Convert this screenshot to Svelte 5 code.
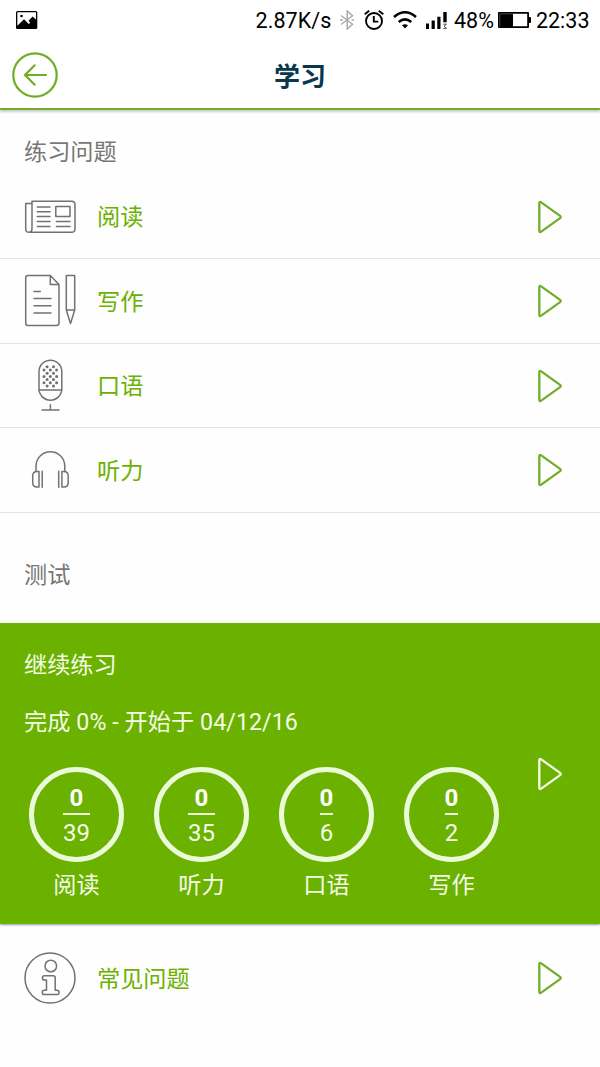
<script>
  const rows = [
    { icon: 'read', label: '阅读' },
    { icon: 'write', label: '写作' },
    { icon: 'speak', label: '口语' },
    { icon: 'listen', label: '听力' }
  ];
  const scores = [
    { done: 0, total: 39, label: '阅读' },
    { done: 0, total: 35, label: '听力' },
    { done: 0, total: 6, label: '口语' },
    { done: 0, total: 2, label: '写作' }
  ];
  const dots = [];
  for (let r = 0; r < 7; r++) {
    const xs = r % 2 ? [20, 26.3, 32.6] : [23.1, 29.5];
    for (const x of xs) dots.push([x, 7.8 + r * 3.2]);
  }
</script>

{#snippet play()}
  <svg class="play" width="26" height="34" viewBox="0 0 26 34">
    <path d="M2.3 3.3Q2.3 1.2 4.2 2.4L23.1 15.9Q24.4 17 23.1 18.1L4.2 31.6Q2.3 32.8 2.3 30.7Z" />
  </svg>
{/snippet}

{#snippet icon(name)}
  <svg class="icon" width="52" height="54" viewBox="0 0 52 54">
    {#if name === 'read'}
      <path d="M8 11.3H47.5Q51 11.3 51 14.8V39Q51 42.3 47.5 42.3H5Q1.7 42.3 1.7 39V13.5H8M8 11.3V38.5Q8 42.3 5 42.3" />
      <path d="M13.3 17H26M13.3 21.7H26M13.3 26.5H26M13.3 31.5H26M13.3 36.4H26M32.5 31.5H46M32.5 36.4H46M31.8 16.6H46V26.6H31.8Z" />
    {:else if name === 'write'}
      <path d="M26.3 1.5H4Q1.7 1.5 1.7 4V49Q1.7 51.5 4 51.5H32.5Q35 51.5 35 49V10.5L26.3 1.5V10.5H35M10 17.6H16.3M10 24.5H27M10 31.8H27M10 39H27" />
      <path d="M42.3 1.5H50.7V36L46.5 49.5L42.3 36ZM42.3 36H50.7" />
    {:else if name === 'speak'}
      <rect x="15" y="1.2" width="22.8" height="40" rx="11.4" />
      <path d="M15 31H37.8M26.4 45.8V50.8M18 51H35" />
      <g class="dots">
        {#each dots as [x, y]}<circle cx={x} cy={y} r="1.5" />{/each}
      </g>
    {:else if name === 'listen'}
      <path d="M12 28.5V23.2A14.4 14.4 0 0 1 40.8 23.2V28.5" />
      <path d="M15 28.5H13Q8.7 28.5 8.7 33V39.5Q8.7 44 13 44H15ZM18.2 28.2V44.2M37.9 28.5H39.9Q44.2 28.5 44.2 33V39.5Q44.2 44 39.9 44H37.9ZM34.7 28.2V44.2" />
    {:else}
      <circle cx="26" cy="27" r="25" />
      <circle cx="26.8" cy="15" r="5.8" />
      <path d="M20.4 24.8H29.2Q31.2 24.8 31.2 26.8V39.3H33Q35 39.3 35 41.4T33 43.5H20.3Q18.3 43.5 18.3 41.4T20.3 39.3H22.5V29H20.4Q18.4 29 18.4 26.9T20.4 24.8Z" />
    {/if}
  </svg>
{/snippet}

<main>
  <div class="status">
    <svg class="photo" width="22" height="18" viewBox="0 0 22 18">
      <rect width="21.3" height="18" rx="1.5" />
      <path d="M1.3 1.3H20V8.6L16.6 5.4L12.5 9.7L14.2 11.8L12.8 13L8 8.3L1.3 14.8Z" fill="#fff" />
      <circle cx="5.5" cy="5" r="1.3" />
    </svg>
    <span class="speed">2.87K/s</span>
    <svg class="bt" width="14" height="20" viewBox="0 0 14 20"><path d="M1 5.5L12.5 14.2L7.2 19V1L12.5 5.8L1 14.5M0 10H3M11.5 10H14" fill="none" stroke="#ababab" stroke-width="1.5" /></svg>
    <svg class="alarm" width="20" height="20" viewBox="0 0 20 20"><g fill="none" stroke="#000" stroke-width="1.9"><circle cx="10" cy="11" r="8" /><path d="M9.8 6V11.6H14.3M.7 4.2L5.2 .8M14.8 .8L19.3 4.2" /></g></svg>
    <svg class="wifi" width="24" height="18" viewBox="0 0 24 18"><path d="M1 6Q12-3.5 23 6M5.7 11Q12 5.7 18.3 11" fill="none" stroke="#000" stroke-width="2.5" /><path d="M9 14.3Q12 12 15 14.3L12 17.4Z" /></svg>
    <svg class="signal" width="22" height="17" viewBox="0 0 22 17"><path d="M0 11.5H3V17H0ZM5.6 8.5H8.8V17H5.6ZM11.3 4.7H14.5V17H11.3ZM17.3 0H20.7V10.2H17.3Z" /><path d="M17.2 12.2H20.5L18 14.2L20.5 16.4H17.2" fill="none" stroke="#555" /></svg>
    <span class="percent">48%</span>
    <svg class="battery" width="34" height="16" viewBox="0 0 34 16"><path fill-rule="evenodd" d="M1 0H30Q31 0 31 1V5H32Q33 5 33 6V10Q33 11 32 11H31V15Q31 16 30 16H1Q0 16 0 15V1Q0 0 1 0ZM15 1.8V14.2H29.2V1.8Z" /><path d="M1.8 15V1.8H15" fill="none" stroke="#777" stroke-width=".6" /></svg>
    <span>22:33</span>
  </div>

  <header>
    <svg width="46" height="46" viewBox="0 0 46 46"><circle cx="23" cy="23" r="21.7" /><path d="M34 23H13.5M22.7 13.3L13 23L22.7 32.7" /></svg>
    <h1>学习</h1>
  </header>

  <h2>练习问题</h2>
  <div class="list">
    {#each rows as row}
      <div class="row">
        {@render icon(row.icon)}
        <span>{row.label}</span>
        {@render play()}
      </div>
    {/each}
  </div>

  <h2 class="test">测试</h2>
  <section>
    <div class="info">
      <p>继续练习</p>
      <p class="progress">完成 0% - 开始于 04/12/16</p>
      <div class="scores">
        {#each scores as s}
          <div class="score">
            <div class="ring">
              <b>{s.done}</b>
              <span>{s.total}</span>
            </div>
            <div class="name">{s.label}</div>
          </div>
        {/each}
      </div>
    </div>
    {@render play()}
  </section>

  <div class="row faq">
    {@render icon('info')}
    <span>常见问题</span>
    {@render play()}
  </div>
</main>

<style>
  :global(body) { margin: 0; background: #fdfffd; }
  main {
    width: 600px;
    height: 1067px;
    overflow: hidden;
    background: #fdfefd;
    font-family: Roboto, "Noto Sans CJK SC", sans-serif;
    font-size: 23.2px;
    color: #6bb100;
  }
  svg { display: block; flex: none; }
  h1, h2, p { margin: 0; font-weight: 400; }

  .status {
    display: flex;
    align-items: center;
    height: 40px;
    padding: 0 10.5px 0 16px;
    box-sizing: border-box;
    background: #fff;
    color: #000;
    font-size: 21.5px;
    white-space: nowrap;
  }
  .speed { margin-left: auto; letter-spacing: .1px; }
  .bt { margin-left: 8.5px; }
  .alarm { margin-left: 9.5px; }
  .wifi { margin-left: 9.5px; }
  .signal { margin-left: 9px; }
  .percent { margin-left: 6px; }
  .battery { margin: 0 4px; }

  header {
    display: grid;
    grid-template-columns: 46px 1fr 46px;
    align-items: center;
    height: 70px;
    padding: 2px 12px 0;
    box-sizing: border-box;
    border-bottom: 2px solid #72ac28;
    background: #fff;
    box-shadow: 0 2px 2px rgba(0, 0, 0, .2);
  }
  header svg { fill: none; stroke: #70ae25; stroke-width: 2.2; stroke-linecap: round; }
  h1 {
    padding-top: 3px;
    color: #08384b;
    font-size: 26px;
    font-weight: 700;
    line-height: 40px;
    text-align: center;
  }

  h2 {
    height: 64.5px;
    padding: 25px 24px 0;
    box-sizing: border-box;
    color: #777;
    font-size: 23.2px;
    line-height: 34px;
  }
  .row {
    display: flex;
    align-items: center;
    height: 84.5px;
    padding: 1px 37px 0 24px;
    box-sizing: border-box;
    border-bottom: 1.5px solid #e4e6e6;
  }
  .row span { margin-left: 21px; padding-top: 1px; line-height: 34px; }
  .play {
    margin-left: auto;
    fill: none;
    stroke: #71ae2a;
    stroke-width: 2.3;
    stroke-linejoin: round;
  }
  .icon {
    fill: none;
    stroke: #707274;
    stroke-width: 1.5;
    stroke-linecap: round;
    stroke-linejoin: round;
  }
  .dots { fill: #707274; stroke: none; }

  .test { height: 110.5px; padding-top: 45.5px; }
  section {
    display: flex;
    align-items: center;
    height: 301px;
    padding: 0 37px 0 24px;
    box-sizing: border-box;
    background: #6bb100;
    box-shadow: 0 1px 2px rgba(0, 0, 0, .4);
    color: #f4fce6;
  }
  section .play { stroke: #f4fce6; }
  .info { height: 100%; padding-top: 25px; box-sizing: border-box; }
  p { line-height: 34px; white-space: nowrap; }
  .progress { margin-top: 23px; letter-spacing: .06px; }
  .scores { display: flex; gap: 20px; margin-top: 28px; }
  .score { width: 105px; }
  .ring {
    display: flex;
    flex-direction: column;
    align-items: center;
    width: 95px;
    height: 95px;
    margin: 0 auto;
    padding-top: 12px;
    box-sizing: border-box;
    border: 5px solid #ebfad8;
    border-radius: 50%;
    font-size: 24px;
  }
  b { color: #fff; line-height: 28px; height: 29px; }
  .ring span { border-top: 2px solid #ebfad8; line-height: 37px; }
  .name { margin-top: 6px; line-height: 34px; text-align: center; }

  .faq { height: 108px; padding-top: 0; border: 0; }
</style>
